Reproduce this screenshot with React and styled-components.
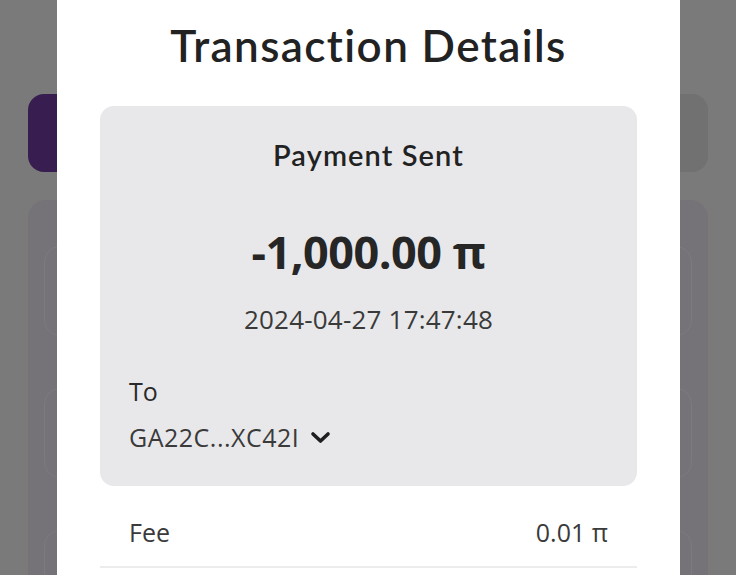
import React from "react";
import styled, { createGlobalStyle } from "styled-components";

const Global = createGlobalStyle`
  html, body { margin: 0; padding: 0; }
  body { background: #7a7a7a; font-family: Lato, "Noto Sans", sans-serif; }
`;

const Screen = styled.div`
  position: relative;
  width: 736px;
  height: 575px;
  overflow: hidden;
  background: #7a7a7a;
`;

const Page = styled.div`
  padding: 94px 28px 0;
  display: flex;
  flex-direction: column;
  gap: 28px;
`;

const TopRow = styled.div`
  display: flex;
  justify-content: space-between;
`;

const PillButton = styled.div`
  width: 120px;
  height: 78px;
  border-radius: 16px;
  background: ${(p) => (p.$primary ? "#381e50" : "#717171")};
`;

const BgCard = styled.div`
  height: 420px;
  border-radius: 18px;
  background: #757278;
  padding: 46px 16px;
  display: flex;
  flex-direction: column;
  gap: 52px;
`;

const BgItem = styled.div`
  height: 88px;
  border-radius: 16px;
  border: 1px solid #7d7a80;
`;

const Modal = styled.div`
  position: absolute;
  left: 57px;
  top: -20px;
  width: 623px;
  height: 640px;
  background: #ffffff;
  border-radius: 18px;
  box-sizing: border-box;
  padding: 38px 43px 0;
  display: flex;
  flex-direction: column;
`;

const Title = styled.h1`
  margin: 0;
  text-align: center;
  font-family: Lato, sans-serif;
  font-weight: 600;
  font-size: 44px;
  line-height: 54px;
  color: #222222;
  letter-spacing: 1.4px;
`;

const SummaryCard = styled.div`
  margin-top: 34px;
  background: #e8e8ea;
  border-radius: 14px;
  height: 380px;
  box-sizing: border-box;
  padding: 31px 29px 0;
  display: flex;
  flex-direction: column;
`;

const Status = styled.div`
  text-align: center;
  font-family: Lato, sans-serif;
  font-weight: 600;
  font-size: 29px;
  line-height: 36px;
  color: #222;
  letter-spacing: 1.1px;
`;

const Amount = styled.div`
  margin-top: 53px;
  text-align: center;
  font-family: "Open Sans", sans-serif;
  font-weight: 700;
  font-size: 45px;
  line-height: 52px;
  color: #262626;
  letter-spacing: -0.5px;
`;

const DateText = styled.div`
  margin-top: 25px;
  text-align: center;
  font-family: "Open Sans", sans-serif;
  font-size: 26px;
  line-height: 32px;
  color: #3a3a3a;
  letter-spacing: 0.2px;
`;

const ToLabel = styled.div`
  margin-top: 40px;
  font-family: "Open Sans", sans-serif;
  font-size: 25px;
  line-height: 32px;
  color: #2a2a2a;
`;

const Address = styled.div`
  margin-top: 15px;
  display: flex;
  align-items: center;
  gap: 11px;
  font-family: "Open Sans", sans-serif;
  font-size: 25px;
  line-height: 30px;
  color: #3a3a3a;
  letter-spacing: 0.5px;
`;

const Row = styled.div`
  display: flex;
  justify-content: space-between;
  align-items: flex-start;
  box-sizing: border-box;
  padding: 30px 29px 0;
  height: 82px;
  border-bottom: 2px solid #ececec;
  font-family: "Open Sans", sans-serif;
  font-size: 25px;
  line-height: 32px;
  color: #3a3a3a;
`;

const Chevron = () => (
  <svg width="21" height="15" viewBox="0 0 21 15" fill="none">
    <path d="M3 4 L10.5 11 L18 4" stroke="#1e1e1e" strokeWidth="3.6" strokeLinecap="round" strokeLinejoin="round" />
  </svg>
);

export default function App() {
  return (
    <>
      <Global />
      <Screen>
        <Page>
          <TopRow>
            <PillButton $primary />
            <PillButton />
          </TopRow>
          <BgCard>
            <BgItem />
            <BgItem />
            <BgItem />
          </BgCard>
        </Page>
        <Modal>
          <Title>Transaction Details</Title>
          <SummaryCard>
            <Status>Payment Sent</Status>
            <Amount>-1,000.00 π</Amount>
            <DateText>2024-04-27 17:47:48</DateText>
            <ToLabel>To</ToLabel>
            <Address>
              GA22C...XC42I
              <Chevron />
            </Address>
          </SummaryCard>
          <Row>
            <span>Fee</span>
            <span>0.01 π</span>
          </Row>
        </Modal>
      </Screen>
    </>
  );
}
